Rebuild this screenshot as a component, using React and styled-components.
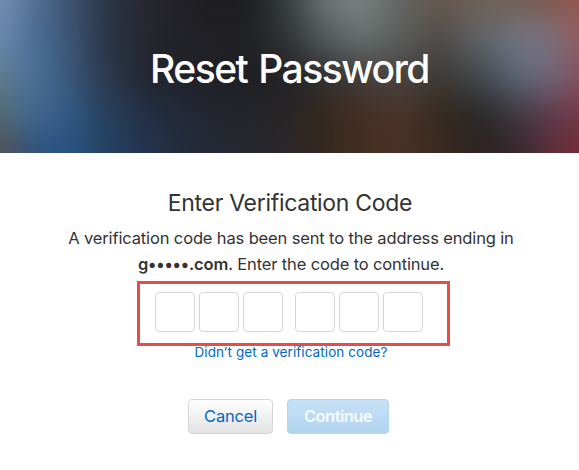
import React from "react";
import styled, { createGlobalStyle } from "styled-components";

const GlobalStyle = createGlobalStyle`
    * {
        box-sizing: border-box;
    }

    body {
        margin: 0;
        background: #ffffff;
        color: #333333;
        font-family: Inter, "Liberation Sans", sans-serif;
    }
`;

const BANNER_HEIGHT = 153;
const BLEED = 40; // keeps the blurred edges outside of the banner
const STOPS = [0, 15, 40, 70, 100, 145, 200, 250, 290, 320, 360, 400, 440, 480, 520, 550, 579];

// each band is a horizontal gradient, faded into the band above it
const BANDS = [
    { y: 0, colors: ['#7790b4', '#6883a5', '#4f6a8a', '#3f5572', '#2b384c', '#28272f', '#1e1e22', '#1e1e21', '#3a4042', '#69706f', '#7c8685', '#636562', '#675951', '#6e6158', '#735f54', '#7f594e', '#985650'] },
    { y: 38, colors: ['#6c8bae', '#5c7da6', '#486a93', '#3d5674', '#2c3a4e', '#25262f', '#212125', '#202124', '#323638', '#515657', '#687170', '#5b5e5d', '#4e4a47', '#616568', '#727784', '#7c717d', '#915d63'] },
    { y: 76, colors: ['#5f7e8c', '#587897', '#4a6d98', '#3a5777', '#2e3d54', '#23252f', '#202128', '#1f1f23', '#232427', '#2e2e30', '#413e3d', '#484442', '#3d3936', '#43494e', '#5e6878', '#70667a', '#86515f'] },
    { y: 115, colors: ['#53696f', '#4a6a82', '#406590', '#335a87', '#294461', '#233045', '#242733', '#25262b', '#2a2525', '#33281f', '#452e21', '#4b3328', '#36291f', '#272727', '#413940', '#5b3b49', '#763849'] },
    { y: 153, colors: ['#554f53', '#3f5067', '#2d517e', '#27537f', '#254567', '#22344e', '#242938', '#27272e', '#2b2629', '#33281f', '#452e22', '#4c3023', '#3c2a20', '#2c2321', '#37262d', '#5d2e3b', '#722b36'] },
];

const Header = styled.header`
    display: grid;
    grid-template-rows: 100%;
    height: ${BANNER_HEIGHT}px;
    overflow: hidden;

    & > * {
        grid-area: 1 / 1;
    }
`;

const Backdrop = styled.div`
    display: grid;
    margin: -${BLEED}px;
    filter: blur(11px);
`;

const Band = styled.div`
    grid-area: 1 / 1;
    background: linear-gradient(to right, ${({ $colors }) => $colors.map((c, i) => `${c} ${STOPS[i] + BLEED}px`).join(', ')});
    ${({ $from, $to }) => $to > 0 && `mask-image: linear-gradient(to bottom, transparent ${$from + BLEED}px, black ${$to + BLEED}px);`}
`;

const Title = styled.h1`
    z-index: 1;
    margin: 0;
    padding-top: 44px;
    font-size: 39px;
    font-weight: 500;
    line-height: 50px;
    letter-spacing: -1.5px;
    word-spacing: 2px;
    text-align: center;
    color: #ffffff;
`;

const Content = styled.main`
    display: flex;
    flex-direction: column;
    align-items: center;
    padding-top: 35px;
`;

const Heading = styled.h2`
    margin: 0 0 0 1px;
    font-size: 23px;
    font-weight: 400;
    line-height: 30px;
    letter-spacing: -0.3px;
`;

const Description = styled.p`
    margin: 7px 0 0 3px;
    font-size: 16.5px;
    line-height: 26px;
    letter-spacing: -0.14px;
    text-align: center;
    white-space: nowrap;
`;

const Address = styled.strong`
    font-weight: 600;
`;

const CodeFrame = styled.div`
    display: flex;
    gap: 12px;
    width: 313px;
    height: 65px;
    margin: 4px 0 0 8px;
    padding: 8px 0 0 15px;
    border: 3px solid #e94b46;
`;

const CodeGroup = styled.div`
    display: flex;
    gap: 4px;
`;

const CodeInput = styled.input`
    width: 40px;
    height: 40px;
    padding: 0;
    border: 1px solid #d6d6d6;
    border-radius: 4px;
    outline: none;
    background: #ffffff;
    font: inherit;
    text-align: center;
`;

const ResendLink = styled.a`
    margin-left: 3px;
    font-size: 13.5px;
    line-height: 13px;
    letter-spacing: 0.08px;
    color: #0068c4;
    text-decoration: none;
`;

const Actions = styled.div`
    display: flex;
    gap: 14px;
    margin: 40px 0 0 -2px;
`;

const Button = styled.button`
    width: ${({ $primary }) => ($primary ? 102 : 85)}px;
    height: 35px;
    padding: 0 0 2px;
    border: 1px solid ${({ $primary }) => ($primary ? '#b2d5f0' : '#d6d6d6')};
    border-radius: 4px;
    background: ${({ $primary }) => ($primary
        ? 'linear-gradient(#c6e1f7, #b2d4ef)'
        : 'linear-gradient(#ffffff, #e3e3e3)')};
    font-family: inherit;
    font-size: 16.5px;
    font-weight: ${({ $primary }) => ($primary ? 600 : 400)};
    letter-spacing: ${({ $primary }) => ($primary ? -0.55 : -0.2)}px;
    color: ${({ $primary }) => ($primary ? '#f6fbff' : '#0068c4')};
`;

const CodeFields = () => (
    <CodeFrame>
        {[0, 1].map((group) => (
            <CodeGroup key={group}>
                {[1, 2, 3].map((n) => (
                    <CodeInput key={n} maxLength={1} aria-label={`Digit ${group * 3 + n}`} />
                ))}
            </CodeGroup>
        ))}
    </CodeFrame>
);

const App = () => {
    return (
        <>
            <GlobalStyle />
            <Header>
                <Backdrop>
                    {BANDS.map(({ y, colors }, i) => (
                        <Band key={y} $colors={colors} $from={i > 0 ? BANDS[i - 1].y : 0} $to={y} />
                    ))}
                </Backdrop>
                <Title>Reset Password</Title>
            </Header>
            <Content>
                <Heading>Enter Verification Code</Heading>
                <Description>
                    A verification code has been sent to the address ending in
                    <br />
                    <Address>g•••••.com</Address>. Enter the code to continue.
                </Description>
                <CodeFields />
                <ResendLink href="#">Didn’t get a verification code?</ResendLink>
                <Actions>
                    <Button type="button">Cancel</Button>
                    <Button type="button" $primary disabled>Continue</Button>
                </Actions>
            </Content>
        </>
    );
};

export default App;
